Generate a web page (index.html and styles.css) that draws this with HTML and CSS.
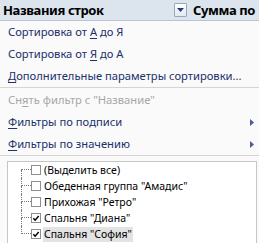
FILE: index.html
```html
<!DOCTYPE html>
<html lang="ru">
<head>
<meta charset="utf-8">
<link rel="stylesheet" href="styles.css">
</head>
<body>
<div class="page">
  <div class="header">
    <div class="col-title">Названия строк</div>
    <div class="dd-btn"><svg width="7" height="4" viewBox="0 0 7 4"><path d="M0 0H7L3.5 4Z" fill="#22388a"/></svg></div>
    <div class="col-sum">Сумма по</div>
  </div>
  <div class="menu">
    <div class="item">Сортировка от <u>А</u> до Я</div>
    <div class="item">Сортировка от <u>Я</u> до А</div>
    <div class="item"><u>Д</u>ополнительные параметры сортировки...</div>
    <div class="sep"></div>
    <div class="item disabled">Сн<u>я</u>ть фильтр с "Название"</div>
    <div class="item sub"><span><u>Ф</u>ильтры по подписи</span><svg class="arr" width="4" height="7" viewBox="0 0 4 7"><path d="M0 0L4 3.5L0 7Z" fill="#4a5c9c"/></svg></div>
    <div class="item sub"><span><u>Ф</u>ильтры по значению</span><svg class="arr" width="4" height="7" viewBox="0 0 4 7"><path d="M0 0L4 3.5L0 7Z" fill="#4a5c9c"/></svg></div>
    <div class="sep sep2"></div>
    <div class="tree">
      <div class="row first"><span class="conn"><i class="t"></i><i class="b"></i></span><span class="cb"></span><span class="lbl">(Выделить все)</span></div>
      <div class="row"><span class="conn"><i class="t"></i><i class="b"></i></span><span class="cb"></span><span class="lbl">Обеденная группа "Амадис"</span></div>
      <div class="row"><span class="conn"><i class="t"></i><i class="b"></i></span><span class="cb"></span><span class="lbl">Прихожая "Ретро"</span></div>
      <div class="row"><span class="conn"><i class="t"></i><i class="b"></i></span><span class="cb on"><svg width="9" height="9" viewBox="0 0 9 9"><path d="M1.5 4.2L3.6 6.4L7.5 1.8" fill="none" stroke="#000" stroke-width="1.7"/></svg></span><span class="lbl">Спальня "Диана"</span></div>
      <div class="row last"><span class="conn"><i class="t"></i><i class="b"></i></span><span class="cb on"><svg width="9" height="9" viewBox="0 0 9 9"><path d="M1.5 4.2L3.6 6.4L7.5 1.8" fill="none" stroke="#000" stroke-width="1.7"/></svg></span><span class="lbl sel">Спальня "София"</span></div>
    </div>
  </div>
</div>
</body>
</html>
```
FILE: styles.css
```css
html, body {
  margin: 0;
  padding: 0;
  background: #fafafa;
}
.page {
  width: 259px;
  height: 243px;
  overflow: hidden;
}
.header {
  height: 21px;
  box-sizing: border-box;
  background: #dce4ee;
  border-bottom: 1px solid #b9c4d2;
  display: flex;
  align-items: center;
  font-family: "Noto Sans", sans-serif;
  font-weight: bold;
  font-size: 13px;
  letter-spacing: -0.4px;
  color: #000;
}
.col-title {
  width: 174px;
  padding-left: 3px;
  box-sizing: border-box;
  white-space: nowrap;
}
.dd-btn {
  width: 13px;
  height: 14px;
  box-sizing: border-box;
  border: 1px solid #97a6bd;
  border-radius: 1px;
  background: linear-gradient(#ffffff, #e3e9f2);
  display: flex;
  align-items: center;
  justify-content: center;
}
.col-sum {
  padding-left: 6px;
  white-space: nowrap;
}
.menu {
  font-family: "Noto Sans", sans-serif;
  font-size: 11.2px;
  color: #20306a;
}
.item {
  height: 22px;
  line-height: 22px;
  padding-left: 8px;
  white-space: nowrap;
}
.item u {
  text-decoration-thickness: 1px;
  text-underline-offset: 2px;
}
.item.disabled {
  color: #a7a7a7;
}
.item.sub {
  display: flex;
  align-items: center;
  justify-content: space-between;
  padding-right: 5px;
}
.sep {
  height: 2px;
  box-sizing: border-box;
  border-top: 1px solid #d4d4d4;
}
.sep2 {
  height: 6px;
}
.tree {
  margin-left: 7px;
  width: 250px;
  height: 90px;
  box-sizing: border-box;
  border: 1px solid #c6c6c6;
  background: #ffffff;
  padding: 0 0 0 13px;
  font-family: "Noto Sans", sans-serif;
  font-size: 10.5px;
  color: #000;
}
.row {
  height: 16px;
  display: flex;
  align-items: center;
  white-space: nowrap;
}
.conn {
  width: 10px;
  height: 16px;
  display: flex;
  flex-direction: column;
}
.conn i {
  display: block;
  height: 8px;
  box-sizing: border-box;
  border-left: 1px dotted #7a7a7a;
}
.conn .t {
  border-bottom: 1px dotted #7a7a7a;
}
.row.first .conn .t {
  border-left: none;
}
.row.last .conn .b {
  border-left: none;
}
.cb {
  width: 10px;
  height: 10px;
  box-sizing: border-box;
  border: 1px solid #8e8f8f;
  background: #fff;
  display: flex;
  align-items: center;
  justify-content: center;
  margin-right: 2px;
}
.cb svg {
  display: block;
}
.lbl {
  padding: 0 1px;
  line-height: 15px;
}
.lbl.sel {
  background: #e3e3e3;
}
```
